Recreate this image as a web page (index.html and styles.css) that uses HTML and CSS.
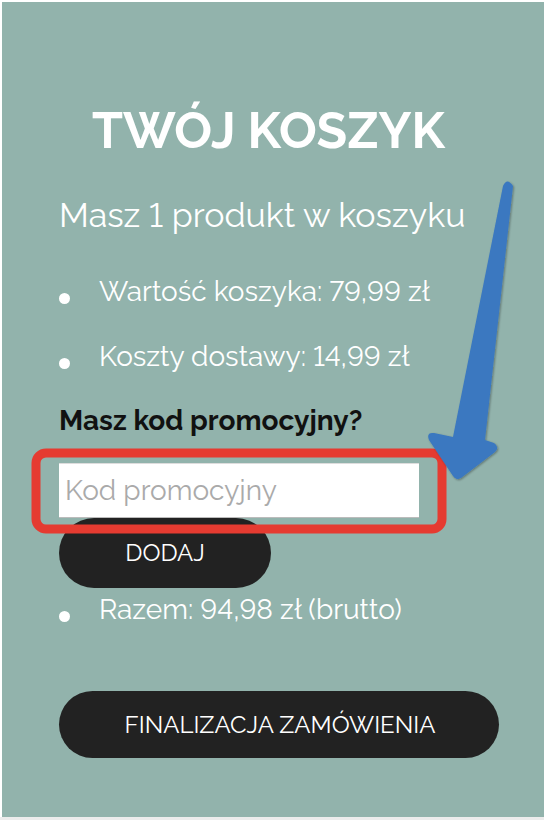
FILE: index.html
```html
<!DOCTYPE html>
<html lang="pl">
<head>
  <meta charset="UTF-8">
  <meta name="viewport" content="width=device-width, initial-scale=1.0">
  <title>Koszyk</title>
  <link rel="stylesheet" href="styles.css">
</head>
<body>
  <div class="cart">
    <h1 class="cart-title">TWÓJ KOSZYK</h1>
    <p class="cart-count">Masz 1 produkt w koszyku</p>
    <ul class="summary">
      <li>Wartość koszyka: 79,99 zł</li>
      <li>Koszty dostawy: 14,99 zł</li>
    </ul>
    <form class="promo">
      <label class="promo-label" for="promo-code">Masz kod promocyjny?</label>
      <input class="promo-input" id="promo-code" type="text" placeholder="Kod promocyjny">
      <button class="btn btn-add" type="button">DODAJ</button>
    </form>
    <ul class="summary summary-total">
      <li>Razem: 94,98 zł (brutto)</li>
    </ul>
    <button class="btn btn-checkout" type="button">FINALIZACJA ZAMÓWIENIA</button>
  </div>
  <div class="page-bottom"></div>

  <!-- podświetlenie pola z kodem -->
  <svg class="marker" width="544" height="820" viewBox="0 0 544 820">
    <defs>
      <filter id="arrow-shadow" x="-20%" y="-20%" width="140%" height="140%">
        <feDropShadow dx="1" dy="1" stdDeviation="0.8" flood-color="#000" flood-opacity="0.35"/>
      </filter>
    </defs>
    <rect x="36" y="453" width="406" height="76" rx="10" fill="none" stroke="#e53b31" stroke-width="9"/>
    <path filter="url(#arrow-shadow)" fill="#3a78c0"
      d="M503 186 Q507 177 513 186 L485 440 L494 443 Q500 447 495 452 L461 478 Q456 481 453 476 L429 440 Q426 432 434 433 L453 437 Z"/>
  </svg>
</body>
</html>
```

FILE: styles.css
```css
body {
  margin: 0;
  background: #fff;
  font-family: "Raleway", "Lato", sans-serif;
  font-variant-numeric: lining-nums;
  position: relative;
}
.cart {
  box-sizing: border-box;
  margin: 2px 0 0 2px;
  height: 815px;
  padding: 99px 66px 0 57px;
  background: #92b3ac;
  color: #fff;
}
.cart-title {
  margin: 0;
  font-size: 50px;
  line-height: 1.2;
  font-weight: 700;
  text-align: center;
}
.cart-count {
  margin: 34px 0 0;
  font-size: 34px;
  line-height: 1.2;
}
.summary {
  list-style: none;
  margin: 39px 0 0;
  padding: 0;
  font-size: 28px;
  line-height: 1.2;
}
.summary li + li {
  margin-top: 32px;
}
.summary li::before {
  content: "";
  display: inline-block;
  width: 11px;
  height: 11px;
  margin-right: 29px;
  border-radius: 50%;
  background: #fff;
  vertical-align: -3px;
}
.promo {
  margin-top: 30px;
}
.promo-label {
  display: block;
  color: #111;
  font-size: 28px;
  line-height: 1.2;
  font-weight: 700;
}
.promo-input {
  display: block;
  box-sizing: border-box;
  width: 360px;
  height: 55px;
  margin-top: 25px;
  padding: 0 6px;
  border: 0;
  border-top: 1px solid #ddd;
  border-bottom: 1px solid #bbb;
  font-family: inherit;
  font-size: 28px;
  color: #333;
}
.promo-input::placeholder {
  color: #aaa;
}
.btn {
  display: block;
  border: 0;
  background: #222;
  color: #fff;
  font-family: inherit;
  cursor: pointer;
}
.btn-add {
  width: 212px;
  height: 70px;
  border-radius: 35px;
  font-size: 24px;
}
.summary-total {
  margin-top: 5px;
}
.btn-checkout {
  width: 440px;
  height: 67px;
  margin-top: 65px;
  padding-right: 4px;
  border-radius: 34px;
  font-size: 24px;
}
.page-bottom {
  height: 3px;
  background: #ececec;
}
.marker {
  position: absolute;
  top: 0;
  left: 0;
  pointer-events: none;
}
```
